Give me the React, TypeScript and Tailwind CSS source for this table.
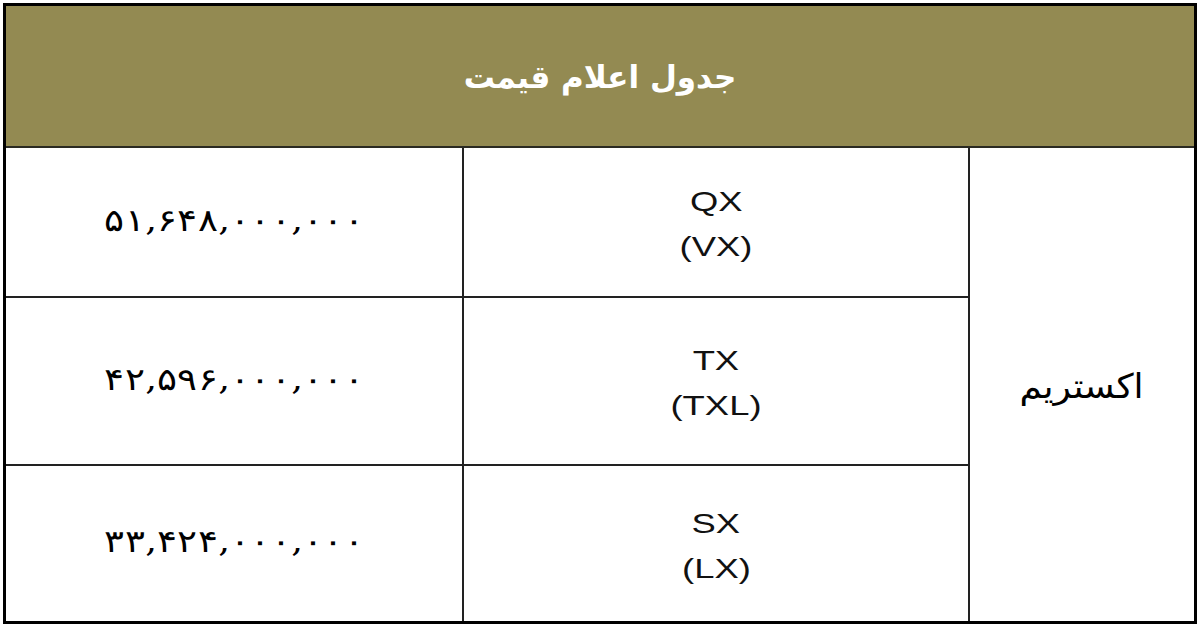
const rows = [
  { price: "۵۱,۶۴۸,۰۰۰,۰۰۰", trim: "QX", alt: "(VX)", h: "h-[150px]" },
  { price: "۴۲,۵۹۶,۰۰۰,۰۰۰", trim: "TX", alt: "(TXL)", h: "h-[168px]" },
  { price: "۳۳,۴۲۴,۰۰۰,۰۰۰", trim: "SX", alt: "(LX)", h: "h-[155px]" },
];

export default function App() {
  return (
    <div className="w-[1200px] h-[627px] bg-white p-[3px]">
      <div className="w-[1194px] border-[3px] border-black flex flex-col">
        {/* سرتیتر */}
        <div
          dir="rtl"
          className="h-[142px] bg-[#938a52] border-b-2 border-[#2a2a22] flex items-center justify-center pt-[2px] text-white font-bold text-[31px] font-['DejaVu_Sans',sans-serif]"
        >
          جدول اعلام قیمت
        </div>

        <div className="flex">
          {/* قیمت */}
          <div className="w-[456px] flex flex-col">
            {rows.map((r, i) => (
              <div
                key={r.trim}
                className={`${r.h} flex items-center justify-center pb-[4px] text-[31px] text-black font-['DejaVu_Serif',serif] ${i < rows.length - 1 ? "border-b-2 border-[#222]" : ""}`}
              >
                <span dir="ltr" className="inline-block scale-x-[1.2]">{r.price}</span>
              </div>
            ))}
          </div>

          {/* تیپ */}
          <div className="w-[508px] border-x-2 border-[#222] flex flex-col">
            {rows.map((r, i) => (
              <div
                key={r.trim}
                className={`${r.h} flex flex-col items-center justify-center pt-[4px] text-[28px] leading-[45px] text-[#111] font-['Liberation_Sans',sans-serif] ${i < rows.length - 1 ? "border-b-2 border-[#222]" : ""}`}
              >
                <span className="inline-block scale-x-[1.3]">{r.trim}</span>
                <span className="inline-block scale-x-[1.3]">{r.alt}</span>
              </div>
            ))}
          </div>

          {/* مدل */}
          <div
            dir="rtl"
            className="flex-1 flex items-center justify-center pt-[4px] text-[34px] text-black font-['DejaVu_Sans',sans-serif]"
          >
            <span className="inline-block scale-x-[1.06]">اکستریم</span>
          </div>
        </div>
      </div>
    </div>
  );
}
